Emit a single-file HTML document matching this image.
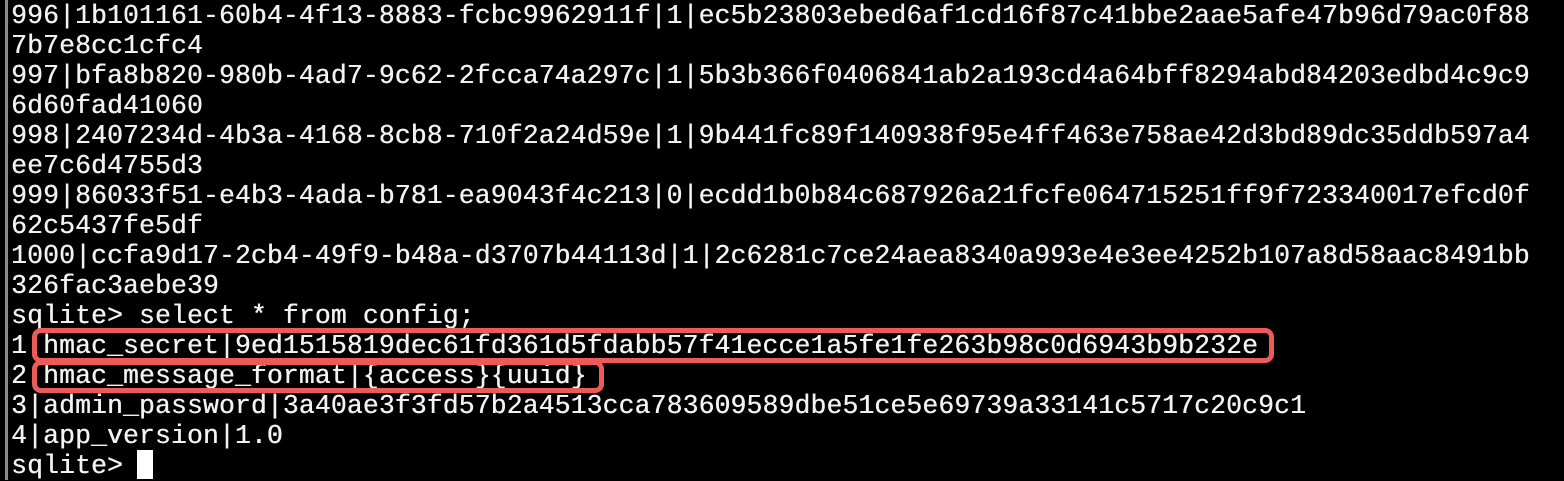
<!DOCTYPE html>
<html><head><meta charset="utf-8"><style>
html,body{margin:0;padding:0;background:#000;width:1564px;height:480px;overflow:hidden}
.bar{position:absolute;left:5px;top:0;width:3px;height:480px;background:#8a8a8a}
pre{position:absolute;left:11px;top:1px;margin:0;font-family:"Liberation Mono",monospace;font-size:26.4px;letter-spacing:0.15px;line-height:30px;color:#f2f2f2;white-space:pre;text-shadow:0.4px 0 0 #f2f2f2}
.box{position:absolute;border:5px solid #ee5a5a;border-radius:9px;box-sizing:border-box}
.cur{position:absolute;left:137px;top:450px;width:16px;height:29px;background:#fff}
</style></head><body>
<div class="bar"></div>
<pre>996|1b101161-60b4-4f13-8883-fcbc9962911f|1|ec5b23803ebed6af1cd16f87c41bbe2aae5afe47b96d79ac0f88
7b7e8cc1cfc4
997|bfa8b820-980b-4ad7-9c62-2fcca74a297c|1|5b3b366f0406841ab2a193cd4a64bff8294abd84203edbd4c9c9
6d60fad41060
998|2407234d-4b3a-4168-8cb8-710f2a24d59e|1|9b441fc89f140938f95e4ff463e758ae42d3bd89dc35ddb597a4
ee7c6d4755d3
999|86033f51-e4b3-4ada-b781-ea9043f4c213|0|ecdd1b0b84c687926a21fcfe064715251ff9f723340017efcd0f
62c5437fe5df
1000|ccfa9d17-2cb4-49f9-b48a-d3707b44113d|1|2c6281c7ce24aea8340a993e4e3ee4252b107a8d58aac8491bb
326fac3aebe39
sqlite&gt; select * from config;
1|hmac_secret|9ed1515819dec61fd361d5fdabb57f41ecce1a5fe1fe263b98c0d6943b9b232e
2|hmac_message_format|{access}{uuid}
3|admin_password|3a40ae3f3fd57b2a4513cca783609589dbe51ce5e69739a33141c5717c20c9c1
4|app_version|1.0
sqlite&gt; </pre>
<div class="box" style="left:32px;top:328px;width:1242px;height:35px"></div>
<div class="box" style="left:32px;top:360px;width:572px;height:33px"></div>
<div class="cur"></div>
</body></html>
